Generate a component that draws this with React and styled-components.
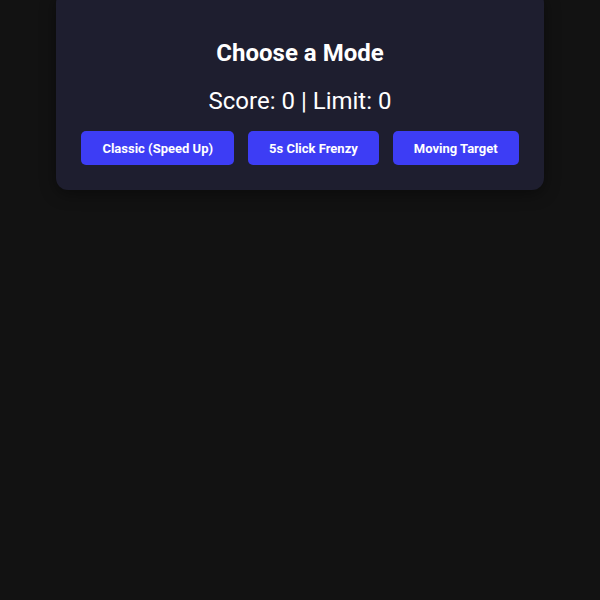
import React from "react";
import styled, { createGlobalStyle } from "styled-components";

const Global = createGlobalStyle`
  html, body { margin: 0; padding: 0; background: #121212; }
  body { font-family: Roboto, "Liberation Sans", sans-serif; color: #fff; height: 600px; overflow: hidden; }
`;

const Page = styled.div`
  display: flex;
  justify-content: center;
`;

const Card = styled.div`
  width: 488px;
  box-sizing: border-box;
  margin-top: -9px;
  background: #1e1e2f;
  border-radius: 12px;
  padding: 48px 25px 25px;
  display: flex;
  flex-direction: column;
  align-items: center;
  box-shadow: 0 4px 16px rgba(0, 0, 0, 0.4);
`;

const Title = styled.h2`
  margin: 0;
  font-size: 24px;
  line-height: 28px;
  font-weight: 700;
`;

const Score = styled.div`
  margin-top: 20px;
  font-size: 24px;
  line-height: 28px;
  font-weight: 400;
`;

const Buttons = styled.div`
  margin-top: 16px;
  display: flex;
  gap: 14px;
  justify-content: center;
`;

const ModeButton = styled.button`
  height: 34px;
  padding: 0 21px;
  border: none;
  border-radius: 5px;
  background: #3d3df5;
  color: #fff;
  font-family: Roboto, "Liberation Sans", sans-serif;
  font-weight: 700;
  font-size: 13px;
  cursor: pointer;
`;

export default function App() {
  return (
    <>
      <Global />
      <Page>
        <Card>
          <Title>Choose a Mode</Title>
          <Score>Score: 0 | Limit: 0</Score>
          <Buttons>
            <ModeButton>Classic (Speed Up)</ModeButton>
            <ModeButton>5s Click Frenzy</ModeButton>
            <ModeButton>Moving Target</ModeButton>
          </Buttons>
        </Card>
      </Page>
    </>
  );
}
